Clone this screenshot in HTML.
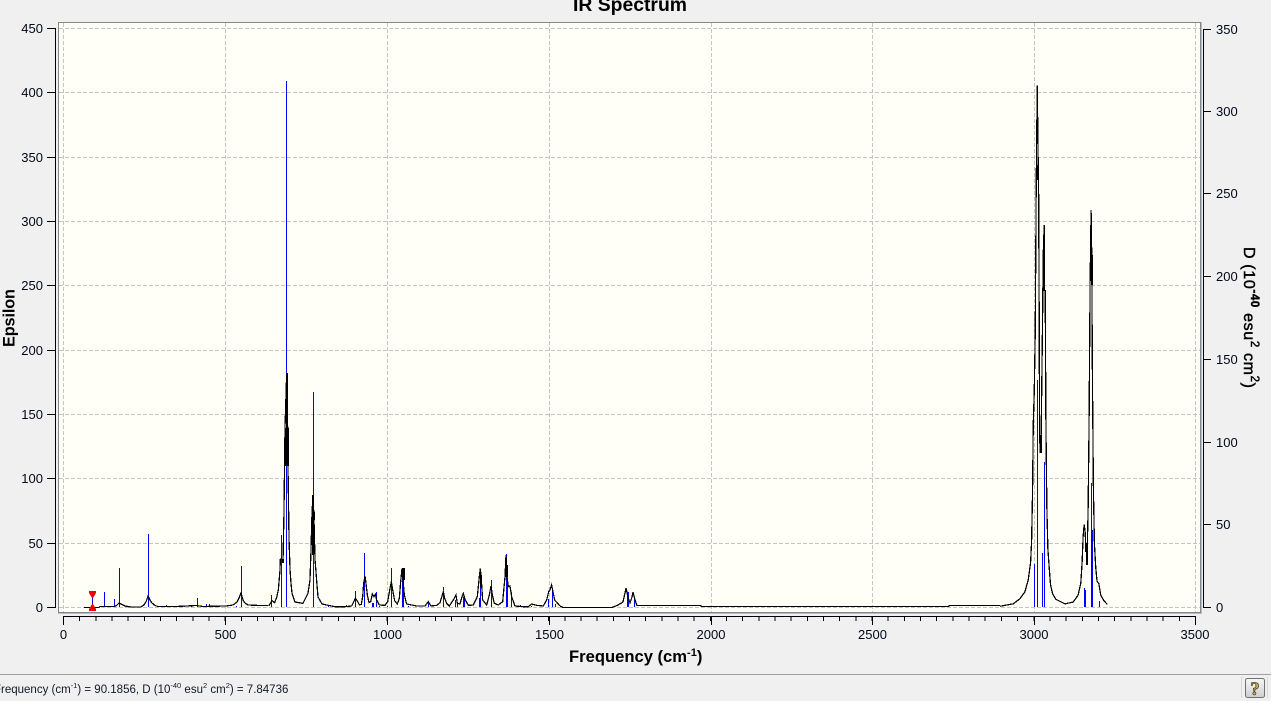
<!DOCTYPE html>
<html><head><meta charset="utf-8"><title>IR Spectrum</title>
<style>
html,body{margin:0;padding:0;background:#f0f0f0;width:1271px;height:701px;overflow:hidden}
svg{display:block;font-family:"Liberation Sans",sans-serif}
.t{font-size:13px;fill:#000818}
.c{fill:none;stroke:#000;stroke-width:1.25;vector-effect:non-scaling-stroke;shape-rendering:crispEdges}
</style></head><body>
<svg width="1271" height="701" viewBox="0 0 1271 701" xmlns="http://www.w3.org/2000/svg">
<defs><linearGradient id="b" x1="0" y1="0" x2="0" y2="1"><stop offset="0" stop-color="#f6f6f6"/><stop offset="1" stop-color="#cfcfcf"/></linearGradient></defs>
<rect width="1271" height="701" fill="#f0f0f0"/>
<text x="573" y="11" font-size="19" font-weight="bold" textLength="114" lengthAdjust="spacingAndGlyphs" fill="#000">IR Spectrum</text>

<!-- plot frame -->
<rect x="58.5" y="22.5" width="1142" height="590" fill="#fffff8" stroke="#828790"/>
<path d="M58 613.5H1202M1201.5 22V614" stroke="#b8bcc2" fill="none"/>

<!-- grid -->
<path d="M59 28.5H1200M59 92.5H1200M59 157.5H1200M59 221.5H1200M59 285.5H1200M59 350.5H1200M59 414.5H1200M59 478.5H1200M59 543.5H1200M59 607.5H1200M63.5 23V612M225.5 23V612M387.5 23V612M549.5 23V612M711.5 23V612M872.5 23V612M1034.5 23V612M1195.5 23V612" stroke="#c4c4c0" stroke-dasharray="4 2" fill="none" shape-rendering="crispEdges"/>

<!-- sticks -->
<path fill="none" stroke="#0000ff" stroke-width="1" shape-rendering="crispEdges" d="M92.5 607V597M104.5 607V592M114.5 607V599M119.5 607V568M148.5 607V534M166.5 607V605M184.5 607V606M191.5 607V605M197.5 607V598M206.5 607V604M209.5 607V604M236.5 607V606M241.5 607V566M271.5 607V595M281.5 607V535M286.5 607V81M313.5 607V392M328.5 607V606M346.5 607V605M355.5 607V591M364.5 607V553M372.5 607V603M373.5 607V603M376.5 607V592M379.5 607V606M387.5 607V606M391.5 607V568M402.5 607V580M403.5 607V570M408.5 607V606M428.5 607V602M443.5 607V587M455.5 607V600M457.5 607V604M463.5 607V597M464.5 607V598M479.5 607V598M480.5 607V573M491.5 607V580M506.5 607V554M507.5 607V578M511.5 607V592M520.5 607V605M528.5 607V606M531.5 607V606M548.5 607V599M552.5 607V590M555.5 607V604M627.5 607V592M628.5 607V592M634.5 607V597M1034.5 607V564M1037.5 607V380M1042.5 607V553M1044.5 607V462M1084.5 607V588M1085.5 607V590M1091.5 607V483M1092.5 607V530M1099.5 607V601"/>

<!-- black curve -->
<polyline class="c" points="84,607.5 99,607.5 100,606.5 115,606.5 117,605 119,603 122,604.5 125,606 131,607 141,607 144,605 146,602 148,596 150,600 152,603 155,605.5 158,606.5 176,606.5 196,605.5 203,606.5 226,606 233,605 237,602 239,598 241,593 243,600 245,603 248,605 260,605.5 268,605.5"/>
<g transform="translate(260,480) scale(.33333)">
<polyline class="c" points="26,377 30,372 36,362 44,368 50,352 55,330 60,270 61,238 63,237 66,238 69,247 72,93 75,-156 80,-321 82,-258 84,-42 87,174 90,267 93,309 96,340 105,366 129,370 144,340 150,300 153,210 156,98 159,45 162,117 165,237 171,315 174,351 186,372 205,376 225,380 255,380 275,378 280,368 286,355 292,363 298,375 304,373 308,350 311,310 315,288 318,310 322,345 327,368 332,365 337,342 342,350 346,343 350,360 358,375 375,376 383,365 390,325 394,305 398,330 404,362 412,372 418,355 422,305 426,265 429,300 433,345 440,372 470,378 495,378 505,365 513,378 530,376 540,368 547,345 550,335 554,355 560,370 568,378 580,360 588,345 592,370 600,372 606,350 610,340 615,358 625,376 640,375 652,350 658,290 661,265 664,300 668,360 680,375 688,345 693,318 697,345 703,370 715,375 728,365 735,290 738,225 741,290 745,320 750,318 755,350 765,378 790,380 805,380 815,372 830,376 850,378 860,360 866,335 870,330 875,315 879,335 884,360 900,378"/>
</g>
<polyline class="c" points="560,606 563,607.5 612,607.5 618,605 623,602 625,593 626,588 628,597 630,603 632,597 633,592 635,600 637,605.5 700,605.5 702,606.5 948,606.5 950,605.5 1000,605.5"/>
<g transform="translate(1000,70) scale(.33245,.3444)">
<polyline class="c" points="0,1557 40,1550 60,1535 75,1515 85,1480 92,1430 95,1370 98,1220 100,1030 103,935 106,765 109,325 112,45 115,275 116,320 118,735 119,1060 121,1110 123,1110 125,965 128,730 130,535 133,450 134,640 136,640 138,1015 141,1275 144,1390 148,1445 152,1495 158,1520 168,1537 195,1550 220,1545 235,1525 243,1490 247,1430 250,1355 253,1320 256,1340 258,1380 262,1410 265,1280 268,1020 271,620 274,407 276,540 278,890 281,1220 284,1375 288,1445 292,1485 297,1490 303,1525 312,1540 323,1552"/>
</g>
<!-- thick overlapping segments of the curve -->
<path fill="#000" shape-rendering="crispEdges" d="M286 373h2v56h-2zM285 428h4v38h-4zM312 512h3v8h-3zM312 495h2v60h-2zM1037 165h2v15h-2zM1040 435h2v18h-2zM1043 255h2v36h-2zM1091 255h2v30h-2zM1085 540h1v12h-1zM1086 552h2v13h-2zM280 559h1v4h-1zM282 559h2v4h-2zM402 568h3v12h-3zM505 565h3v12h-3zM480 575h2v12h-2z"/>

<!-- cursor -->
<path d="M89 591H96V593L93 598H92L89 593Z" fill="#f00000"/>
<path d="M92 604H93L96 609V611H89V609Z" fill="#f00000"/>

<!-- left axis -->
<path d="M55.5 28V608M47 28.5H55M47 92.5H55M47 157.5H55M47 221.5H55M47 285.5H55M47 350.5H55M47 414.5H55M47 478.5H55M47 543.5H55M47 607.5H55" stroke="#000" fill="none" shape-rendering="crispEdges"/>
<g text-anchor="end">
<text class="t" x="43" y="33">450</text><text class="t" x="43" y="97">400</text><text class="t" x="43" y="162">350</text><text class="t" x="43" y="226">300</text><text class="t" x="43" y="290">250</text><text class="t" x="43" y="355">200</text><text class="t" x="43" y="419">150</text><text class="t" x="43" y="483">100</text><text class="t" x="43" y="548">50</text><text class="t" x="43" y="612">0</text>
</g>
<text transform="translate(14.5,347) rotate(-90)" font-size="16.3" font-weight="bold" fill="#000" textLength="58">Epsilon</text>

<!-- right axis -->
<path d="M1203.5 29V608M1203 29.5H1211M1203 111.5H1211M1203 193.5H1211M1203 276.5H1211M1203 359.5H1211M1203 442.5H1211M1203 524.5H1211M1203 607.5H1211" stroke="#000" fill="none" shape-rendering="crispEdges"/>
<text class="t" x="1216" y="34">350</text><text class="t" x="1216" y="116">300</text><text class="t" x="1216" y="198">250</text><text class="t" x="1216" y="281">200</text><text class="t" x="1216" y="364">150</text><text class="t" x="1216" y="447">100</text><text class="t" x="1216" y="529">50</text><text class="t" x="1216" y="612">0</text>
<text transform="translate(1244,247) rotate(90)" font-size="16" fill="#000" stroke="#000" stroke-width=".45" textLength="141" lengthAdjust="spacing">D (10<tspan font-size="11.5" dy="-7" font-weight="bold">-40</tspan><tspan dy="7"> esu</tspan><tspan font-size="11.5" dy="-7">2</tspan><tspan dy="7"> cm</tspan><tspan font-size="11.5" dy="-7">2</tspan><tspan dy="7">)</tspan></text>

<!-- bottom axis -->
<path d="M63 616.5H1196M63.5 616V625M225.5 616V625M387.5 616V625M549.5 616V625M711.5 616V625M872.5 616V625M1034.5 616V625M1195.5 616V625" stroke="#000" fill="none" shape-rendering="crispEdges"/>
<line x1="63" y1="618.5" x2="1196" y2="618.5" stroke="#000" stroke-width="5" stroke-dasharray="1 15.171" shape-rendering="crispEdges"/>
<g text-anchor="middle">
<text class="t" x="63.5" y="639">0</text><text class="t" x="225.5" y="639">500</text><text class="t" x="387.5" y="639">1000</text><text class="t" x="549.5" y="639">1500</text><text class="t" x="711" y="639">2000</text><text class="t" x="872.5" y="639">2500</text><text class="t" x="1034" y="639">3000</text><text class="t" x="1195" y="639">3500</text>
</g>
<text x="569" y="662" font-size="16.6" font-weight="bold" fill="#000">Frequency (cm<tspan font-size="11" dy="-6">-1</tspan><tspan dy="6">)</tspan></text>

<!-- status bar -->
<rect x="0" y="674" width="1271" height="1" fill="#a0a0a0"/>
<text x="-6" y="693" font-size="11.5" fill="#101828">Frequency (cm<tspan font-size="7.5" dy="-5">-1</tspan><tspan dy="5">) = 90.1856, D (10</tspan><tspan font-size="7.5" dy="-5">-40</tspan><tspan dy="5"> esu</tspan><tspan font-size="7.5" dy="-5">2</tspan><tspan dy="5"> cm</tspan><tspan font-size="7.5" dy="-5">2</tspan><tspan dy="5">) = 7.84736</tspan></text>
<rect x="1241" y="677" width="1" height="21" fill="#d8d8d8"/>
<rect x="1267" y="677" width="1" height="21" fill="#d8d8d8"/>
<rect x="1245.5" y="678.5" width="19" height="19" rx="2" fill="url(#b)" stroke="#707070"/>
<text x="1255" y="695" text-anchor="middle" font-size="19" font-weight="bold" fill="#c4ac60" stroke="#4a4020" stroke-width=".7" style="font-family:'Liberation Serif',serif">?</text>
</svg>
</body></html>
